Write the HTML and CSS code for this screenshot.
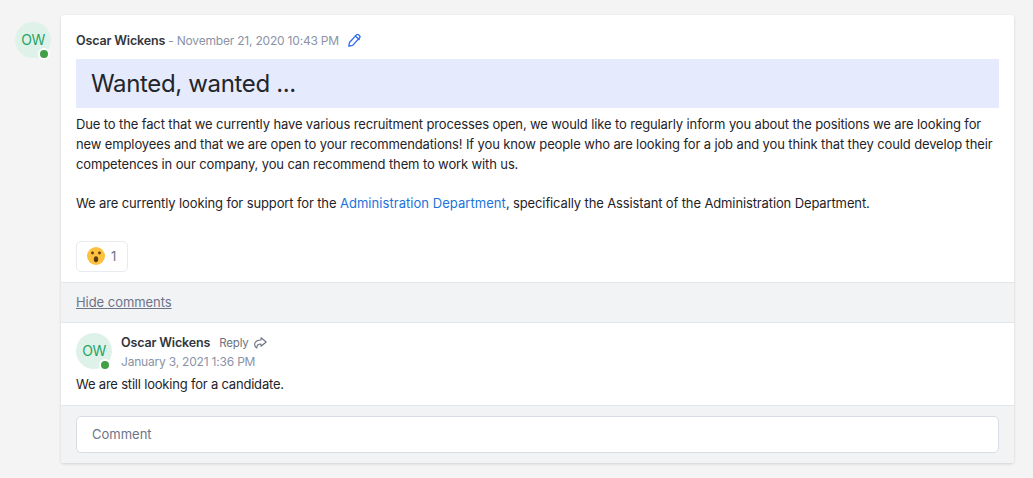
FILE: index.html
```html
<!DOCTYPE html>
<html lang="en">
<head>
<meta charset="utf-8">
<title>Wanted, wanted ...</title>
<link rel="stylesheet" href="styles.css">
</head>
<body>
<div class="post-row">
  <div class="avatar">OW<span class="presence"></span></div>
  <article class="card">
    <div class="post-body">
      <div class="meta">
        <strong class="name">Oscar Wickens</strong>
        <span class="date">- November 21, 2020 10:43 PM</span>
        <svg class="edit" width="13" height="14" viewBox="0 0 13 14" fill="none" stroke="#2f6bf0" stroke-width="1.300" stroke-linejoin="round" stroke-linecap="round"><path d="M.8 13.200l.7-3.700 6.900-7.600a1.500 1.500 0 0 1 2.100-.1l1 .9a1.500 1.500 0 0 1 .1 2.100l-6.900 7.600z"/><path d="M7.300 3.100l3.900 3.500"/></svg>
      </div>
      <h1 class="title">Wanted, wanted ...</h1>
      <p class="para">Due to the fact that we currently have various recruitment processes open, we would like to regularly inform you about the positions we are looking for new employees and that we are open to your recommendations! If you know people who are looking for a job and you think that they could develop their competences in our company, you can recommend them to work with us.</p>
      <p class="para para-gap">We are currently looking for support for the <a class="link" href="#">Administration Department</a>, specifically the Assistant of the Administration Department.</p>
      <div class="reaction">
        <svg width="18" height="18" viewBox="0 0 18 18"><circle cx="9" cy="9" r="9" fill="#fdc13f"/><circle cx="5.500" cy="6" r="1.400" fill="#5b3a10"/><circle cx="12.500" cy="6" r="1.400" fill="#5b3a10"/><ellipse cx="9" cy="12.300" rx="2.200" ry="3" fill="#5b3a10"/></svg>
        <span class="count">1</span>
      </div>
    </div>
    <div class="toggle-bar"><a class="toggle" href="#">Hide comments</a></div>
    <div class="comment">
      <div class="comment-head">
        <div class="avatar">OW<span class="presence"></span></div>
        <div class="comment-meta">
          <div class="comment-line">
            <strong class="name">Oscar Wickens</strong>
            <span class="reply">Reply
              <svg width="14" height="12" viewBox="0 0 14 12" fill="none" stroke="#6b7280" stroke-width="1.100" stroke-linejoin="round"><path d="M8 .8l5.200 4.200L8 9.200V7C5.600 7 3.800 7.800 3.800 11 .8 9.200.2 3.400 8 3z"/></svg>
            </span>
          </div>
          <div class="date comment-date">January 3, 2021 1:36 PM</div>
        </div>
      </div>
      <p class="para comment-text">We are still looking for a candidate.</p>
    </div>
    <div class="composer">
      <div class="input">Comment</div>
    </div>
  </article>
</div>
</body>
</html>
```
FILE: styles.css
```css
* { box-sizing: border-box; }
html, body { height: 100%; }
body {
  margin: 0;
  background: #f4f4f4;
  font-family: "Inter", "Liberation Sans", sans-serif;
  font-size: 13px;
  color: #1f2328;
  overflow: hidden;
}
.post-row {
  display: flex;
  align-items: flex-start;
  gap: 10px;
  padding: 15px 19px 0 15px;
}
.avatar {
  position: relative;
  flex: none;
  width: 36px;
  height: 36px;
  margin-top: 7px;
  padding-bottom: 1px;
  border-radius: 50%;
  background: #dff2ea;
  color: #1fa463;
  font-size: 14px;
  letter-spacing: -.4px;
  display: flex;
  align-items: center;
  justify-content: center;
}
.presence {
  position: absolute;
  right: 1px;
  bottom: -2px;
  width: 12px;
  height: 12px;
  border-radius: 50%;
  background: #3fa045;
  border: 2px solid #fff;
}
.card {
  flex: 1;
  background: #fff;
  border-radius: 3px;
  box-shadow: 0 1px 3px rgba(0, 0, 0, .14);
}
.post-body { padding: 16px 15px 10px; }
.meta { display: flex; align-items: center; height: 18px; gap: 3px; }
.name { font-weight: 600; font-size: 12.500px; letter-spacing: -.15px; color: #33363b; }
.date { color: #8a93a6; font-size: 12px; letter-spacing: -.2px; }
.edit { margin-left: 6px; margin-top: -1px; }
.title {
  margin: 10px 0 0;
  height: 49px;
  padding: 0 15px;
  background: #e5eafd;
  font-size: 24px;
  font-weight: 400;
  letter-spacing: -.35px;
  line-height: 49px;
  color: #22252a;
}
.para { margin: 6px 0 0; line-height: 20px; letter-spacing: -.125px; color: #1f2328; }
.para-gap { margin-top: 19px; }
.link { color: #1a73d9; text-decoration: none; letter-spacing: .05px; }
.reaction {
  margin-top: 28px;
  width: 52px;
  height: 31px;
  padding-bottom: 1px;
  border: 1px solid #e8ebef;
  border-radius: 5px;
  display: flex;
  align-items: center;
  gap: 6px;
  padding-left: 10px;
}
.count { color: #6b7385; font-size: 13px; }
.toggle-bar {
  height: 41px;
  background: #f1f3f5;
  border-top: 1px solid #e3e7eb;
  border-bottom: 1px solid #e3e7eb;
  padding: 0 15px 2px;
  display: flex;
  align-items: center;
}
.toggle { color: #6d7488; text-decoration: underline; letter-spacing: -.05px; }
.comment { padding: 10px 15px 11px; }
.comment-head { display: flex; gap: 9px; }
.comment-head .avatar { margin-top: 0; }
.comment-line { display: flex; align-items: center; gap: 9px; height: 19px; }
.reply { color: #6b7280; font-size: 11.500px; letter-spacing: -.2px; display: flex; align-items: center; gap: 4px; }
.comment-date { margin-top: 2px; }
.comment-text { margin-top: 5px; letter-spacing: -.2px; }
.composer {
  background: #f1f3f5;
  border-top: 1px solid #e3e7eb;
  padding: 10px 15px;
  border-radius: 0 0 3px 3px;
}
.input {
  height: 37px;
  background: #fff;
  border: 1px solid #d8dce3;
  border-radius: 5px;
  padding: 0 15px 1px;
  display: flex;
  align-items: center;
  color: #6d7488;
}
```
